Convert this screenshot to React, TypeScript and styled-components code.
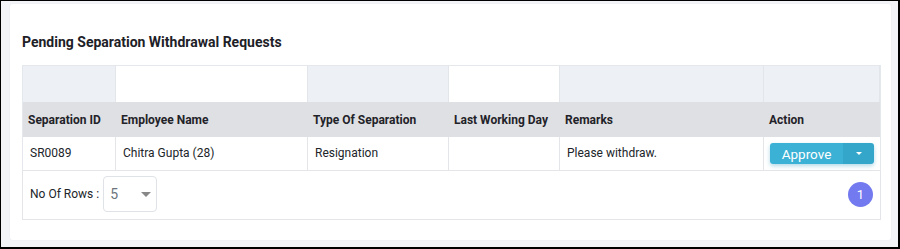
import React from "react";
import styled, { createGlobalStyle } from "styled-components";

const GlobalStyle = createGlobalStyle`
  html, body { margin: 0; padding: 0; }
  body { font-family: Roboto, "Liberation Sans", sans-serif; background: #f2f4f8; }
  * { box-sizing: border-box; }
`;

const Frame = styled.div`
  width: 900px;
  height: 249px;
  border-style: solid;
  border-color: #000;
  border-width: 1px 2px 2px 1px;
  background: #f2f4f8;
  padding: 3px 7px 7px 9px;
  display: flex;
`;

const Card = styled.div`
  flex: 1;
  background: #fff;
  border-radius: 3px;
  box-shadow: 0 0 2px rgba(0, 0, 0, 0.05);
  padding: 28px 10px 0 12px;
  display: flex;
  flex-direction: column;
`;

const Title = styled.h2`
  margin: 0 0 13px 0;
  font-size: 14px;
  line-height: 20px;
  font-weight: 700;
  color: #1d2127;
`;

const Grid = styled.div`
  display: grid;
  grid-template-columns: 93px 192px 141px 111px 204px 116px;
  border-top: 1px solid #e4e7eb;
  border-left: 1px solid #e4e7eb;
  border-right: 1px solid #e4e7eb;
`;

const FilterCell = styled.div<{ $tint: boolean }>`
  height: 36px;
  background: ${(p) => (p.$tint ? "#edf0f5" : "#ffffff")};
  border-right: 1px solid #e2e5e9;
  &:last-child { border-right: none; }
`;

const HeadCell = styled.div`
  height: 35px;
  background: #dfe0e3;
  display: flex;
  align-items: center;
  padding: 0 5px;
  font-size: 12px;
  font-weight: 700;
  color: #1f2329;
  white-space: nowrap;
`;

const DataCell = styled.div`
  height: 34px;
  padding: 9px 7px 0 7px;
  font-size: 12px;
  color: #212529;
  border-right: 1px solid #e3e5e8;
  border-bottom: 1px solid #e3e5e8;
  &:last-child { border-right: none; padding: 6px 6px 0 6px; }
`;

const SplitButton = styled.div`
  display: flex;
  width: 104px;
  height: 21px;
  border-radius: 3px;
  overflow: hidden;
  box-shadow: 0 2px 4px rgba(40, 150, 190, 0.35);
`;

const ButtonMain = styled.div`
  flex: 1;
  background: #3ab1d5;
  color: #fff;
  font-size: 13.5px;
  display: flex;
  align-items: center;
  justify-content: center;
`;

const ButtonCaret = styled.div`
  width: 31px;
  background: #34a6c9;
  display: flex;
  align-items: center;
  justify-content: center;
  &::after {
    content: "";
    border-left: 3px solid transparent;
    border-right: 3px solid transparent;
    border-top: 3px solid #fff;
  }
`;

const Footer = styled.div`
  height: 49px;
  border: 1px solid #e3e5e8;
  border-top: none;
  display: flex;
  align-items: center;
  justify-content: space-between;
  padding: 0 7px 2px 7px;
`;

const RowsLabel = styled.div`
  display: flex;
  align-items: center;
  gap: 4px;
  font-size: 12px;
  color: #212529;
`;

const SelectBox = styled.div`
  width: 54px;
  height: 36px;
  border: 1px solid #dfe2e6;
  border-radius: 4px;
  display: flex;
  align-items: center;
  justify-content: space-between;
  padding: 0 5px 0 6px;
  color: #6c757d;
  font-size: 14px;
  &::after {
    content: "";
    border-left: 5px solid transparent;
    border-right: 5px solid transparent;
    border-top: 5px solid #888;
  }
`;

const PageDot = styled.div`
  width: 25px;
  height: 25px;
  border-radius: 50%;
  background: #7379ef;
  color: #fff;
  font-size: 13px;
  display: flex;
  align-items: center;
  justify-content: center;
`;

const headers = [
  "Separation ID",
  "Employee Name",
  "Type Of Separation",
  "Last Working Day",
  "Remarks",
  "Action",
];
const tints = [true, false, true, false, true, true];

export default function App() {
  return (
    <>
      <GlobalStyle />
      <Frame>
        <Card>
          <Title>Pending Separation Withdrawal Requests</Title>
          <div>
            <Grid>
              {tints.map((t, i) => (
                <FilterCell key={i} $tint={t} />
              ))}
              {headers.map((h) => (
                <HeadCell key={h}>{h}</HeadCell>
              ))}
              <DataCell>SR0089</DataCell>
              <DataCell>Chitra Gupta (28)</DataCell>
              <DataCell>Resignation</DataCell>
              <DataCell></DataCell>
              <DataCell>Please withdraw.</DataCell>
              <DataCell>
                <SplitButton>
                  <ButtonMain>Approve</ButtonMain>
                  <ButtonCaret />
                </SplitButton>
              </DataCell>
            </Grid>
            <Footer>
              <RowsLabel>
                No Of Rows :
                <SelectBox>5</SelectBox>
              </RowsLabel>
              <PageDot>1</PageDot>
            </Footer>
          </div>
        </Card>
      </Frame>
    </>
  );
}
